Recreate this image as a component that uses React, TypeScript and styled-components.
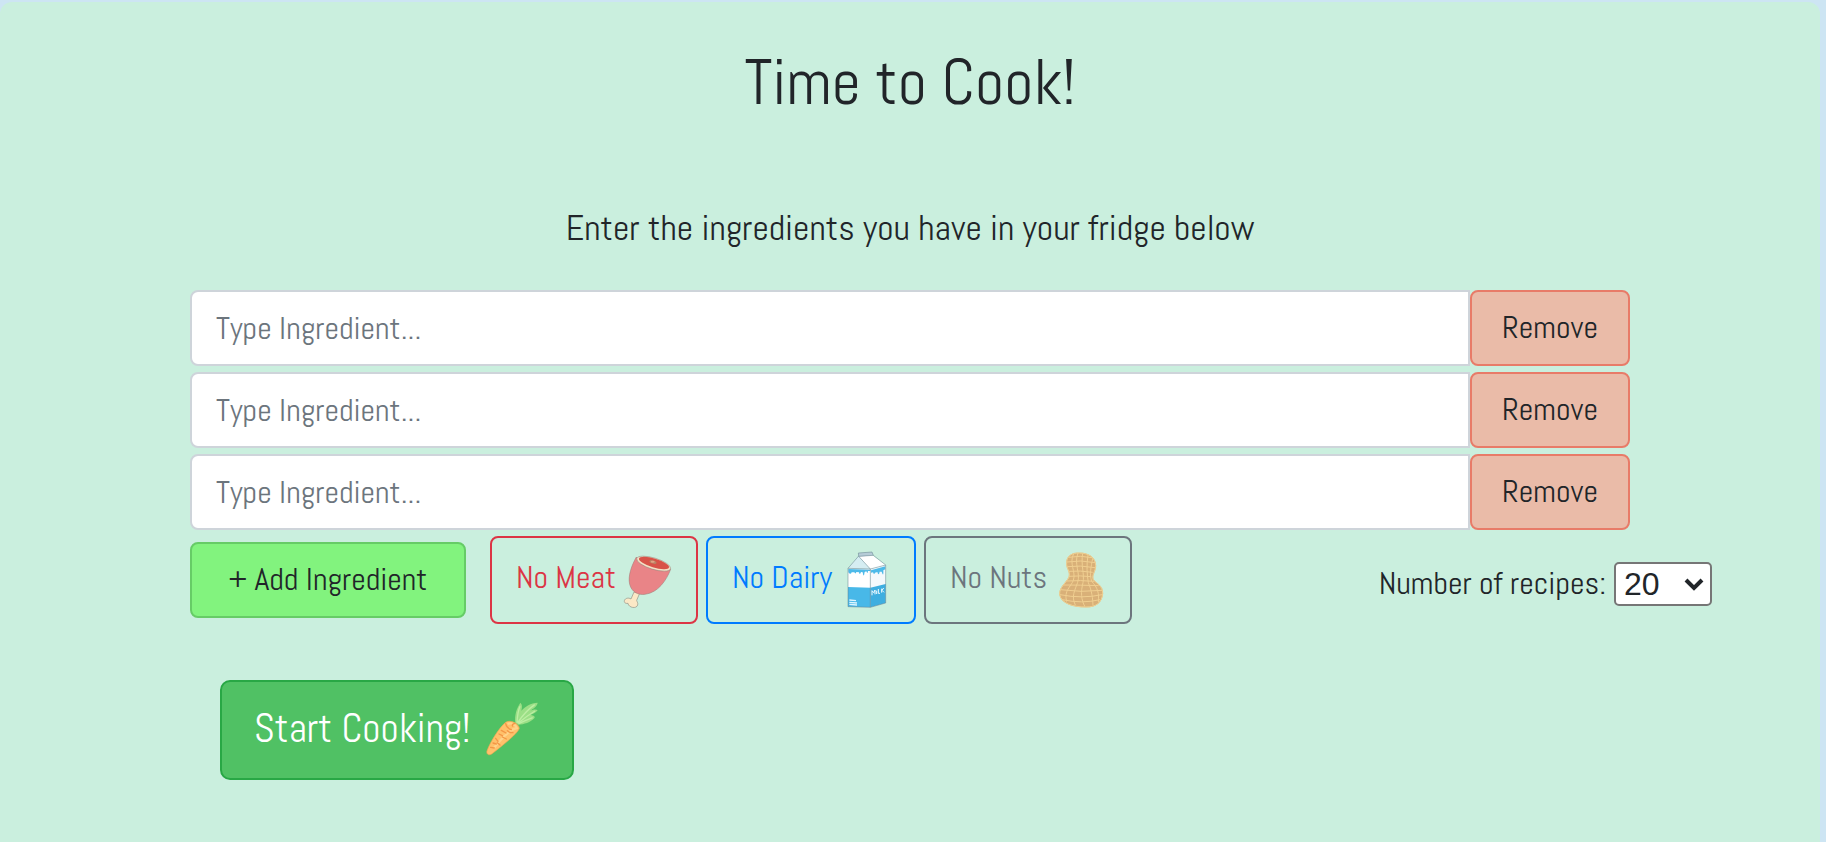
import React, { useState } from "react";
import styled, { createGlobalStyle } from "styled-components";

const GlobalStyle = createGlobalStyle`
  * { box-sizing: border-box; }
  body {
    margin: 0;
    background: #cde5f3;
    color: #212529;
    font-family: Abel, "Liberation Sans Narrow", "Arial Narrow", sans-serif;
    font-size: 32px;
    line-height: 48px;
  }
  button, input { font: inherit; }
`;

const Card = styled.main`
  min-height: calc(100vh - 2px);
  margin: 2px 6px 0 0;
  padding: 40px 108px 60px;
  border-radius: 12px 12px 0 0;
  background: #caefde;
`;

const Title = styled.h1`
  margin: 0 0 74px;
  font-size: 64px;
  line-height: 80px;
  font-weight: 400;
  text-align: center;
`;

const Lead = styled.p`
  margin: 0 0 30px;
  font-size: 36px;
  line-height: 64px;
  text-align: center;
`;

const Form = styled.form`
  margin-left: 82px;
`;

const Rows = styled.div`
  display: grid;
  gap: 6px;
  margin: 0 82px 6px 0;
`;

const Row = styled.div`
  display: flex;
`;

const IngredientInput = styled.input`
  flex: 1;
  min-width: 0;
  height: 76px;
  padding: 12px 24px;
  border: 2px solid #ced4da;
  border-radius: 8px 0 0 8px;
  background: #fff;
  color: #495057;
  &::placeholder { color: #6c757d; opacity: 1; }
`;

const Button = styled.button`
  padding: 11px 24px 13px;
  border: 2px solid;
  border-radius: 8px;
  color: #212529;
  white-space: nowrap;
  cursor: pointer;
`;

const RemoveButton = styled(Button)`
  width: 160px;
  border-color: #e87b68;
  background: #eabba8;
`;

const AddButton = styled(Button)`
  width: 276px;
  margin-right: 16px;
  border-color: #66cc66;
  background: #82f37e;
`;

const FilterButton = styled(Button)<{ $color: string; $wide?: boolean }>`
  display: flex;
  justify-content: space-between;
  width: ${(p) => (p.$wide ? 210 : 208)}px;
  padding: 12px 24px;
  line-height: 54px;
  border-color: ${(p) => p.$color};
  background: transparent;
  color: ${(p) => p.$color};
`;

const StartButton = styled(Button)`
  display: flex;
  justify-content: space-between;
  width: 354px;
  margin: 56px 0 0 30px;
  padding: 18px 32px;
  border-color: #28a745;
  border-radius: 10px;
  background: #50c164;
  color: #fff;
  font-size: 40px;
  line-height: 58px;
`;

const Actions = styled.div`
  display: flex;
  align-items: center;
  gap: 8px;
`;

const Count = styled.div`
  display: flex;
  align-items: center;
  gap: 8px;
  margin-left: auto;
  padding-top: 8px;
`;

const CountLabel = styled.label`
  line-height: 44px;
  padding-bottom: 2px;
`;

const SelectBox = styled.div`
  display: grid;
  align-items: center;
  width: 98px;
  > * { grid-area: 1 / 1; }
  > svg { justify-self: end; margin-right: 8px; pointer-events: none; }
`;

const Select = styled.select`
  appearance: none;
  width: 100%;
  height: 44px;
  padding: 0 8px;
  border: 2px solid #767676;
  border-radius: 5px;
  background: #fff;
  color: #212529;
  font: 32px/40px "Liberation Sans", Arial, sans-serif;
`;

const Meat = () => (
  <svg width="50" height="60" viewBox="426 90 150 180" aria-hidden="true">
    <path d="M462 216L453 237C444 231 432 236 433 245C434 250 440 251 444 250C446 264 470 267 473 255C475 249 470 244 470 241L479 220Z" fill="#fbe8c6" stroke="#938f83" strokeWidth="2" />
    <path d="M469 111C455 136 443 168 449 193C455 216 474 226 495 223C535 218 559 181 572 148C552 158 492 147 469 111Z" fill="#e98487" stroke="#9d7773" strokeWidth="1.5" />
    <ellipse cx="521" cy="131" rx="53" ry="17" transform="rotate(17 521 131)" fill="#f5dfc4" stroke="#8f847a" strokeWidth="1.5" />
    <ellipse cx="522" cy="129" rx="47" ry="13" transform="rotate(17 522 129)" fill="#d85348" />
    <ellipse cx="519" cy="126" rx="11" ry="5" transform="rotate(17 519 126)" fill="#b98465" />
    <ellipse cx="518" cy="125" rx="6" ry="3" fill="#e3a283" />
  </svg>
);

const Milk = () => (
  <svg width="50" height="60" viewBox="120 90 150 180" aria-hidden="true">
    <path d="M144 145L211 147V262L144 260Z" fill="#fff" />
    <path d="M211 147L257 135V249L211 262Z" fill="#f4f9fc" />
    <path d="M144 145L176 108L211 147Z" fill="#d5edf2" />
    <path d="M176 108L217 106L257 135L211 147Z" fill="#fff" />
    <path d="M175 99L216 96L220 106L176 110Z" fill="#b6ccd7" />
    <path d="M144 201L211 203V262L144 260Z" fill="#48b8e8" />
    <path d="M211 203L257 192V249L211 262Z" fill="#3eaee0" />
    <path d="M145 147L211 149V153H204Q203 165 199 154L194 156Q191 176 188 157L183 156Q179 168 177 157L169 156Q167 164 163 157L155 157Q152 166 145 157Z" fill="#4dbae9" />
    <path d="M213 151L256 139V148L250 151Q251 174 245 155L239 155Q236 170 232 156L225 158Q222 166 219 157L213 158Z" fill="#4dbae9" />
    <path d="M148 240L168 242M148 247L171 249M148 253L171 255" stroke="#dff5ff" strokeWidth="4" />
    <path d="M216 226V212L221 218L225 210V223M230 212V222M235 207V220H240M245 206V218M251 204L246 211L252 217" fill="none" stroke="#effaff" strokeWidth="3" />
    <path d="M144 145L176 108L175 99L216 96L220 106L257 135V249L211 262L144 260ZM144 145L211 147L257 135M211 147V262M176 109L211 147M176 109L220 106" fill="none" stroke="#617f8a" strokeWidth="1.5" strokeLinejoin="round" />
  </svg>
);

const Peanut = () => (
  <svg width="50" height="60" viewBox="768 90 150 180" aria-hidden="true">
    <path d="M800 127C800 108 817 98 838 99C865 99 887 112 887 137C887 155 874 165 880 179C888 190 909 196 908 221C906 247 888 262 857 261C821 261 784 251 779 224C777 201 800 188 807 171C812 154 798 146 800 127Z" fill="#d9b078" stroke="#d7bd80" strokeWidth="2" />
    <g fill="none" stroke="#f0cf91" strokeWidth="3">
      <path d="M800 127C800 108 817 98 838 99C865 99 887 112 887 137C887 155 874 165 880 179C888 190 909 196 908 221C906 247 888 262 857 261C821 261 784 251 779 224C777 201 800 188 807 171C812 154 798 146 800 127Z" />
      <path d="M821 101C806 132 829 155 820 181C812 202 791 211 800 245M834 99C821 133 842 158 833 187C825 210 813 229 826 255M848 100C842 137 854 160 849 188C842 215 843 240 855 260M864 105C859 137 861 163 865 188C876 214 878 235 879 257M878 115C873 141 868 163 875 184C893 203 898 220 895 246" />
      <path d="M806 112Q841 105 876 113M801 126Q842 119 885 128M802 140Q841 135 885 143M807 154Q840 151 878 157M807 169Q841 166 874 170M800 183Q841 180 883 184M790 195Q841 195 896 197M781 209Q842 218 907 211M780 224Q846 237 906 224M787 239Q846 252 900 239" />
    </g>
  </svg>
);

const Carrot = () => (
  <svg width="54" height="60" viewBox="859 120 162 180" aria-hidden="true">
    <path d="M947 189C944 165 951 145 962 128C969 135 967 144 965 152C977 139 993 129 1014 128C1013 139 1000 146 991 153C1000 148 1010 147 1014 151C1008 159 999 163 991 165C999 165 1006 168 1005 173C992 187 974 193 955 194Z" fill="#9bdf86" />
    <path d="M952 188Q954 155 961 139M954 188Q977 154 1005 134M955 190Q978 170 1006 153M957 191Q980 180 999 173" fill="none" stroke="#bdeea4" strokeWidth="4" />
    <path d="M918 187C931 178 957 190 959 205C955 220 908 257 876 282C866 288 858 281 863 270C873 244 899 203 918 187Z" fill="#ffc16b" stroke="#f5a653" strokeWidth="2" />
    <path d="M924 192C935 186 950 196 951 204C930 209 909 231 882 265" fill="none" stroke="#ffd38a" strokeWidth="7" />
    <path d="M918 191Q921 205 935 209M946 190Q935 193 939 198M940 218Q928 218 923 212M905 211L919 219M898 222L908 227M888 235L895 244M920 237L908 231M880 249L890 252M873 262L884 264M901 255L893 248" fill="none" stroke="#f49746" strokeWidth="4" strokeLinecap="round" />
  </svg>
);

export default function App() {
  const [items, setItems] = useState([
    { id: 1, value: "" },
    { id: 2, value: "" },
    { id: 3, value: "" },
  ]);
  const add = () =>
    setItems((list) => [...list, { id: Math.max(0, ...list.map((i) => i.id)) + 1, value: "" }]);
  const remove = (id: number) => setItems((list) => list.filter((i) => i.id !== id));
  const edit = (id: number, value: string) =>
    setItems((list) => list.map((i) => (i.id === id ? { id, value } : i)));

  return (
    <>
      <GlobalStyle />
      <Card>
        <Title>Time to Cook!</Title>
        <Lead>Enter the ingredients you have in your fridge below</Lead>
        <Form onSubmit={(e) => e.preventDefault()}>
          <Rows>
            {items.map((item) => (
              <Row key={item.id}>
                <IngredientInput
                  aria-label="Ingredient"
                  placeholder="Type Ingredient..."
                  value={item.value}
                  onChange={(e) => edit(item.id, e.target.value)}
                />
                <RemoveButton type="button" onClick={() => remove(item.id)}>Remove</RemoveButton>
              </Row>
            ))}
          </Rows>
          <Actions>
            <AddButton type="button" onClick={add}>+ Add Ingredient</AddButton>
            <FilterButton type="button" $color="#dc3545">No Meat <Meat /></FilterButton>
            <FilterButton type="button" $color="#007bff" $wide>No Dairy <Milk /></FilterButton>
            <FilterButton type="button" $color="#6c757d">No Nuts <Peanut /></FilterButton>
            <Count>
              <CountLabel htmlFor="count">Number of recipes:</CountLabel>
              <SelectBox>
                <Select id="count" defaultValue="20">
                  <option>10</option>
                  <option>20</option>
                  <option>30</option>
                </Select>
                <svg width="20" height="14" viewBox="0 0 20 14" aria-hidden="true">
                  <path d="M2 3L10 11L18 3" fill="none" stroke="#212529" strokeWidth="4" />
                </svg>
              </SelectBox>
            </Count>
          </Actions>
          <StartButton type="submit">Start Cooking! <Carrot /></StartButton>
        </Form>
      </Card>
    </>
  );
}
